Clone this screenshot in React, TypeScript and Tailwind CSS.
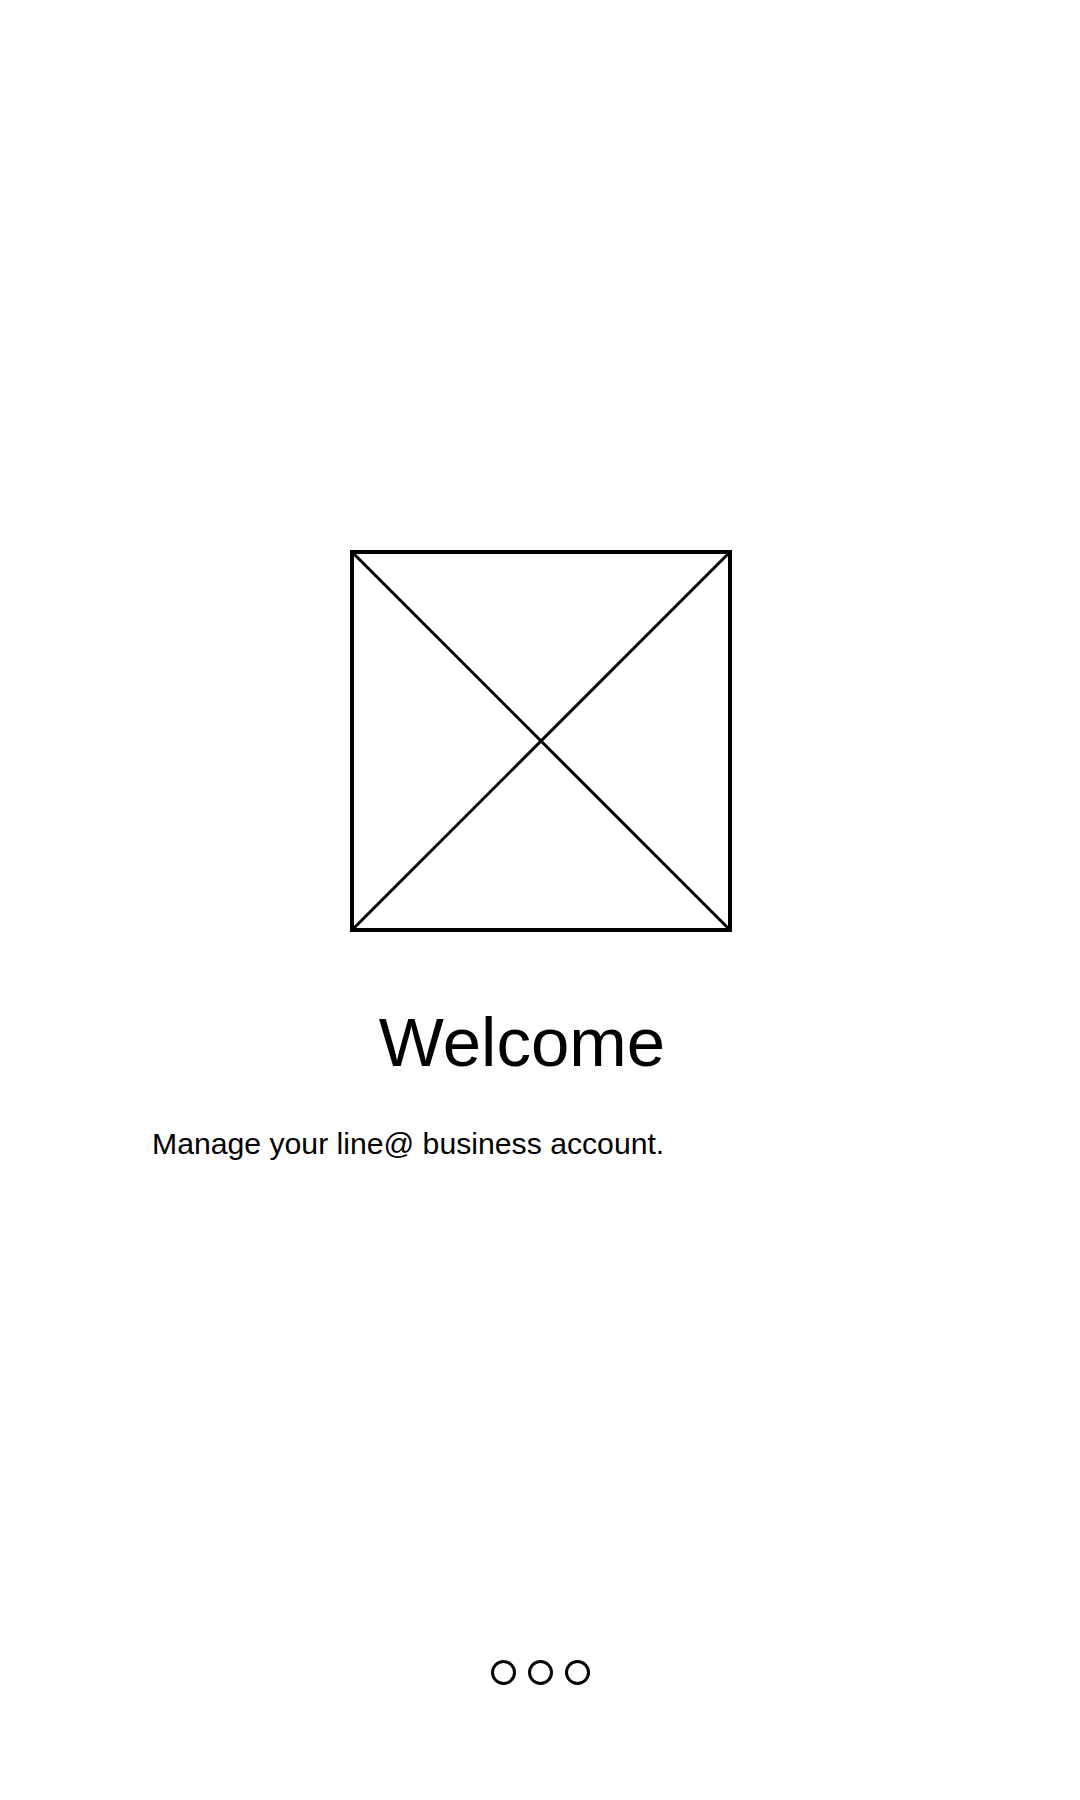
import clsx from 'clsx';

export default function App() {
  return (
    <div
      className="w-[1080px] h-[1800px] bg-white flex flex-col text-black"
      style={{ fontFamily: '"Liberation Sans", Arial, sans-serif' }}
    >
      <div className="pt-[550px] flex justify-center">
        <PlaceholderImage />
      </div>
      <div className="mt-[72px] flex justify-center pr-[36px]">
        <h1 className="text-[69px] leading-[78px] font-normal">Welcome</h1>
      </div>
      <p className="mt-[44px] pl-[152px] text-[30.2px] leading-[36px]">
        Manage your line@ business account.
      </p>
      <PageDots count={3} />
    </div>
  );
}

function PlaceholderImage() {
  return (
    <svg width="382" height="382" viewBox="0 0 382 382" className="ml-[2px]">
      <rect x="2" y="2" width="378" height="378" fill="none" stroke="#000" strokeWidth="4" />
      <line x1="2" y1="2" x2="380" y2="380" stroke="#000" strokeWidth="3" />
      <line x1="380" y1="2" x2="2" y2="380" stroke="#000" strokeWidth="3" />
    </svg>
  );
}

function PageDots({ count }: { count: number }) {
  const dots = Array.from({ length: count }, (_, i) => i);
  return (
    <div className="mt-[498px] flex justify-center gap-3">
      {dots.map((i) => (
        <span
          key={i}
          className={clsx('block w-[25px] h-[25px] rounded-full', 'border-[3px] border-black')}
        />
      ))}
    </div>
  );
}
